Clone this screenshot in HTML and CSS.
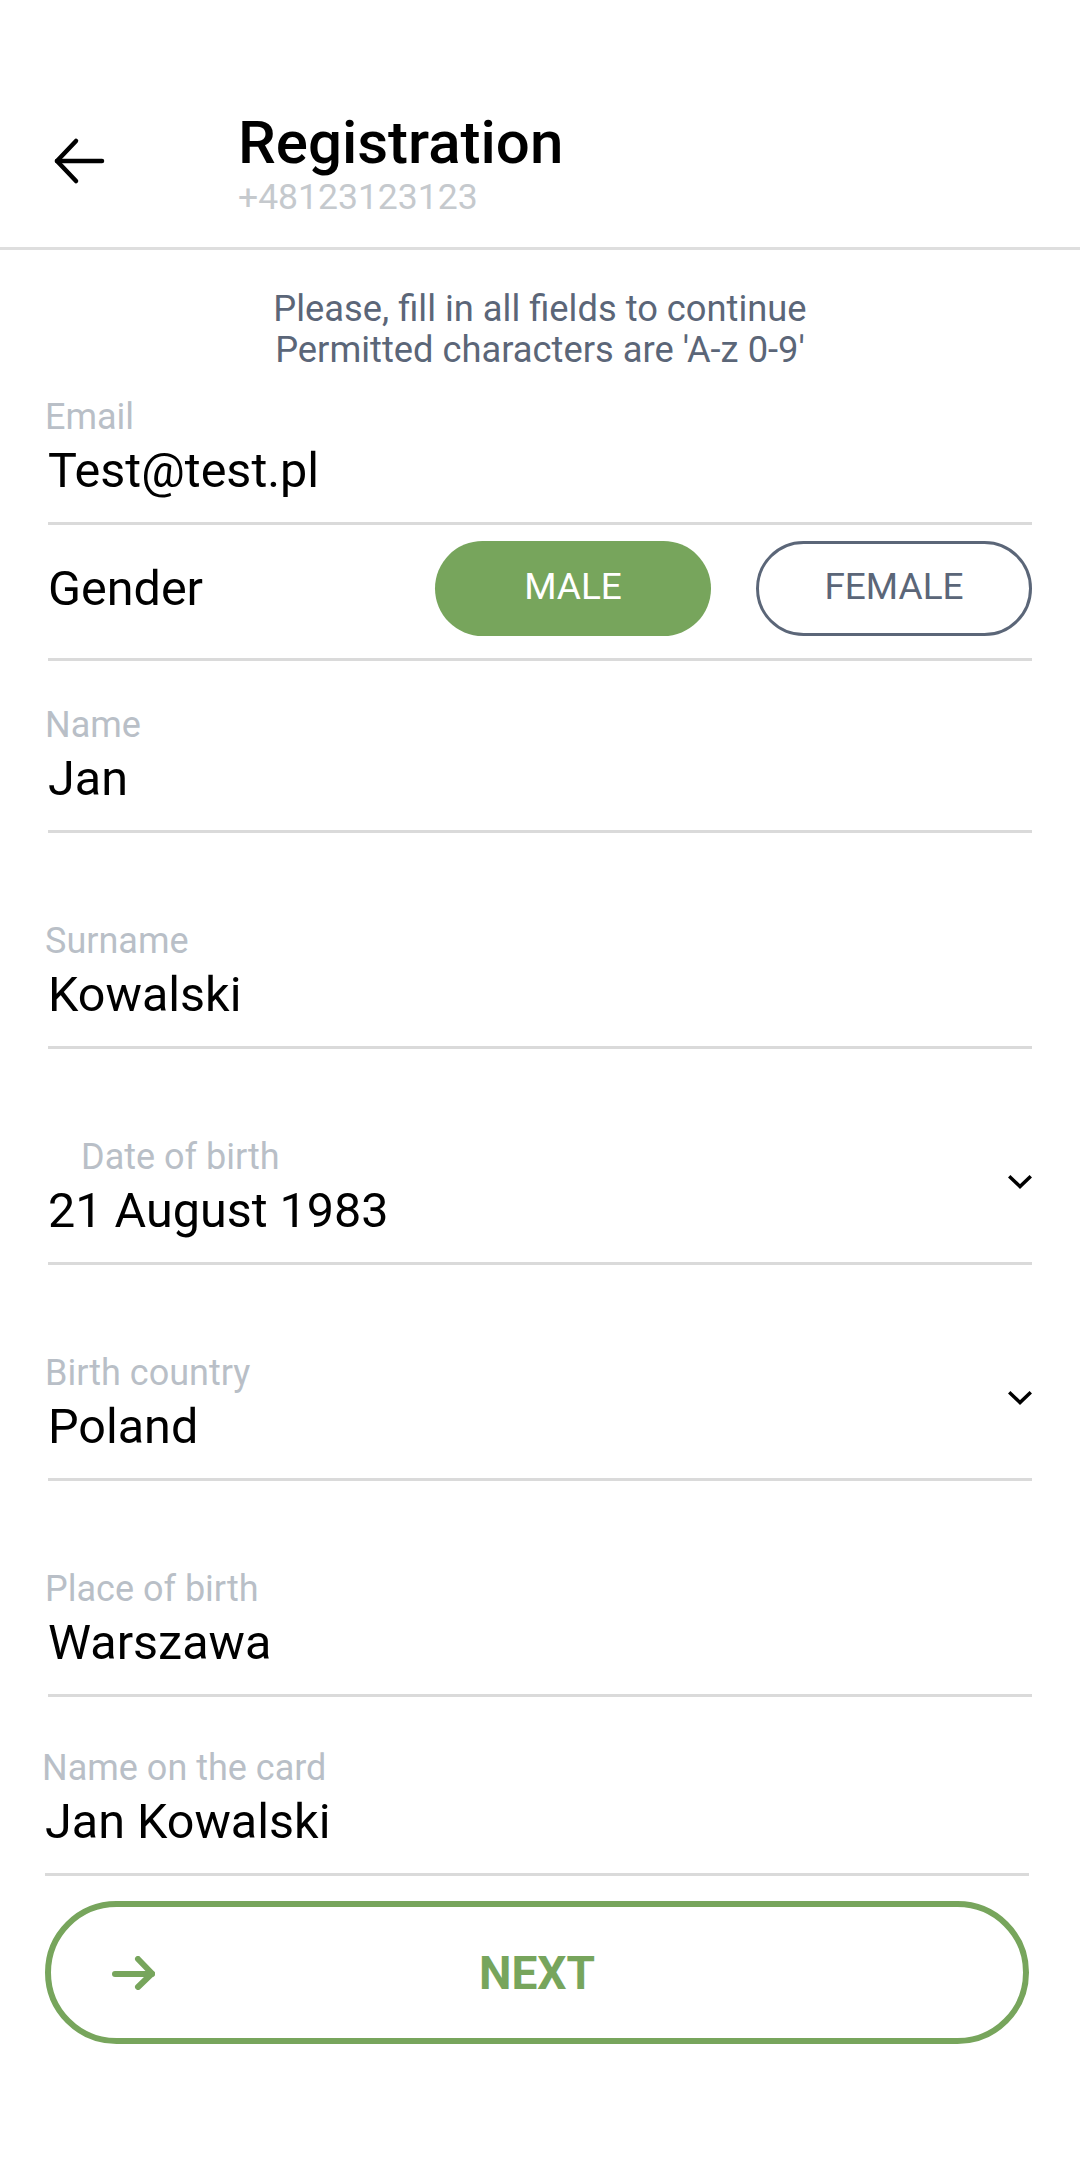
FILE: index.html
```html
<!DOCTYPE html>
<html lang="en">
<head>
<meta charset="utf-8">
<title>Registration</title>
<link rel="stylesheet" href="styles.css">
</head>
<body>
<header class="topbar">
  <div class="back" aria-label="Back">
    <svg width="52" height="48" viewBox="0 0 52 48" fill="none" stroke="#000" stroke-width="4.5" stroke-linecap="round" stroke-linejoin="round">
      <path d="M49 24H4"/>
      <path d="M23 4L4 24L23 44"/>
    </svg>
  </div>
  <div class="titles">
    <h1 class="title">Registration</h1>
    <div class="phone">+48123123123</div>
  </div>
</header>
<main class="content">
  <p class="hint">Please, fill in all fields to continue<br>Permitted characters are 'A-z 0-9'</p>
  <div class="form">
    <div class="field field--email">
      <div class="field-main">
        <div class="label">Email</div>
        <div class="value">Test@test.pl</div>
      </div>
    </div>
    <div class="gender-row">
      <div class="gender-label">Gender</div>
      <div class="pill pill--active">MALE</div>
      <div class="pill pill--outline">FEMALE</div>
    </div>
    <div class="field field--after-gender">
      <div class="field-main">
        <div class="label">Name</div>
        <div class="value">Jan</div>
      </div>
    </div>
    <div class="field">
      <div class="field-main">
        <div class="label">Surname</div>
        <div class="value">Kowalski</div>
      </div>
    </div>
    <div class="field">
      <div class="field-main">
        <div class="label label--indent">Date of birth</div>
        <div class="value">21 August 1983</div>
      </div>
      <svg class="chevron" width="24" height="14" viewBox="0 0 24 14" fill="none" stroke="#000" stroke-width="3.5" stroke-linecap="square">
        <path d="M2.5 2.5L12 11.5L21.5 2.5"/>
      </svg>
    </div>
    <div class="field">
      <div class="field-main">
        <div class="label">Birth country</div>
        <div class="value">Poland</div>
      </div>
      <svg class="chevron" width="24" height="14" viewBox="0 0 24 14" fill="none" stroke="#000" stroke-width="3.5" stroke-linecap="square">
        <path d="M2.5 2.5L12 11.5L21.5 2.5"/>
      </svg>
    </div>
    <div class="field">
      <div class="field-main">
        <div class="label">Place of birth</div>
        <div class="value">Warszawa</div>
      </div>
    </div>
  </div>
  <div class="form form--shifted">
    <div class="field field--card">
      <div class="field-main">
        <div class="label">Name on the card</div>
        <div class="value">Jan Kowalski</div>
      </div>
    </div>
    <button class="next" type="button">
      <svg class="next-icon" width="43" height="34" viewBox="0 0 43 34" fill="none" stroke="#77a55c" stroke-width="6" stroke-linecap="round" stroke-linejoin="round">
        <path d="M3 18H40"/>
        <path d="M26 3L40 17.5L26 31"/>
      </svg>
      <span class="next-text">NEXT</span>
      <span class="next-spacer"></span>
    </button>
  </div>
</main>
</body>
</html>
```
FILE: styles.css
```css
* {
  box-sizing: border-box;
}

html, body {
  margin: 0;
  padding: 0;
  background: #ffffff;
}

body {
  width: 1080px;
  min-height: 2160px;
  font-family: Roboto, "Noto Sans", "Liberation Sans", sans-serif;
  color: #000;
}

.topbar {
  display: flex;
  height: 250px;
  border-bottom: 3px solid #dedede;
}

.back {
  margin-top: 137px;
  margin-left: 53px;
  width: 52px;
  height: 48px;
}

.back svg {
  display: block;
}

.titles {
  margin-top: 111px;
  margin-left: 133px;
}

.title {
  margin: 0;
  font-size: 60px;
  line-height: 64px;
  font-weight: 500;
  color: #000;
}

.phone {
  margin-top: 2px;
  font-size: 35.5px;
  line-height: 40px;
  color: #c5c9cd;
}

.hint {
  margin: 38px 0 0;
  text-align: center;
  font-size: 36.3px;
  line-height: 41px;
  color: #5b6678;
}

.form {
  padding: 0 48px;
}

.form--shifted {
  padding: 0 51px 0 45px;
}

.field {
  display: flex;
  align-items: center;
  margin-top: 87px;
  padding-bottom: 23px;
  border-bottom: 3px solid #dadada;
}

.field--email {
  margin-top: 26px;
}

.field--after-gender {
  margin-top: 43px;
}

.field--card {
  margin-top: 50px;
}

.field-main {
  flex: 1;
}

.label {
  font-size: 36px;
  line-height: 42px;
  color: #b9bfc7;
  margin-left: -3px;
}

.label--indent {
  padding-left: 36px;
}

.value {
  margin-top: 5px;
  font-size: 48.5px;
  line-height: 56px;
  color: #000;
}

.chevron {
  display: block;
  flex: none;
  margin-bottom: 12px;
}

.gender-row {
  display: flex;
  align-items: center;
  gap: 45px;
  padding: 16px 0 22px;
  border-bottom: 3px solid #dadada;
}

.gender-label {
  flex: 1;
  font-size: 48.5px;
  line-height: 56px;
}

.pill {
  width: 276px;
  height: 95px;
  border-radius: 48px;
  display: flex;
  align-items: center;
  justify-content: center;
  font-size: 37px;
  line-height: 40px;
  padding-bottom: 4px;
}

.pill--active {
  background: #77a55c;
  color: #ffffff;
}

.pill--outline {
  border: 3px solid #5b6678;
  color: #5b6678;
  background: #fff;
}

.next {
  margin-top: 25px;
  width: 100%;
  height: 143px;
  border: 6px solid #77a55c;
  border-radius: 72px;
  background: #fff;
  display: grid;
  grid-template-columns: 1fr auto 1fr;
  align-items: center;
  padding: 0;
  font-family: Roboto, "Noto Sans", "Liberation Sans", sans-serif;
}

.next-icon {
  display: block;
  justify-self: start;
  margin-left: 61px;
}

.next-text {
  font-size: 46px;
  line-height: 52px;
  font-weight: 700;
  color: #77a55c;
}
```
